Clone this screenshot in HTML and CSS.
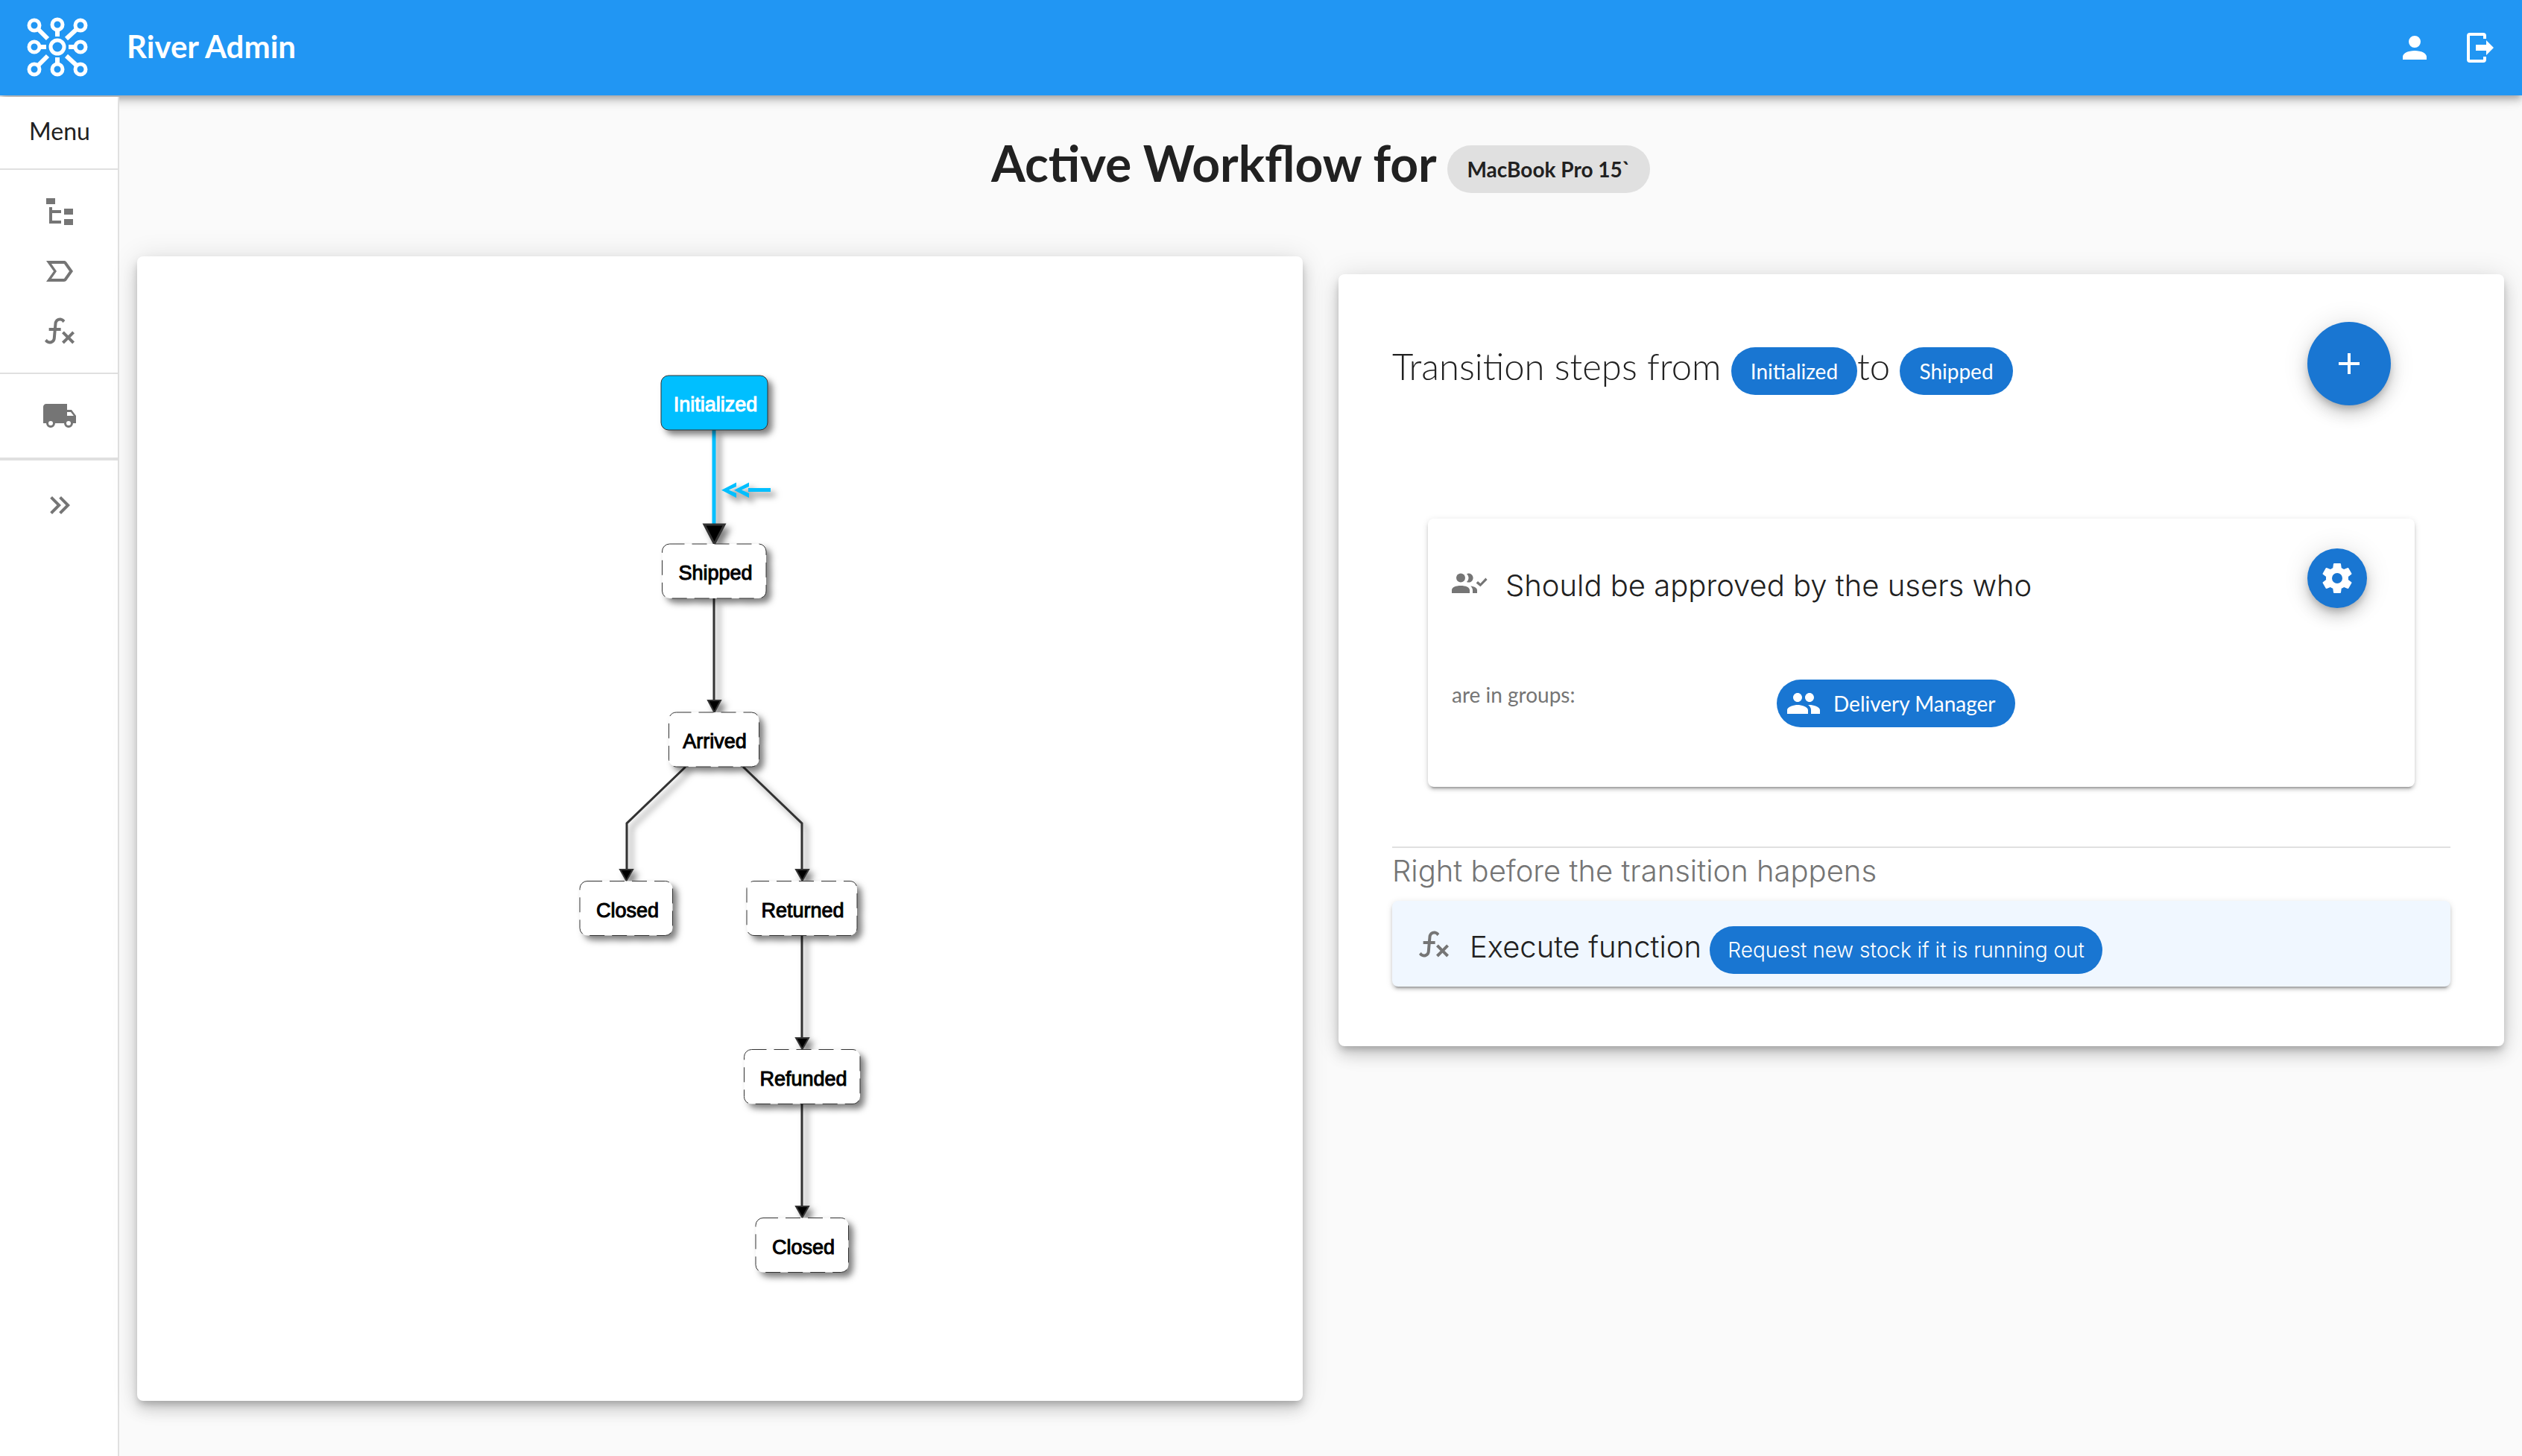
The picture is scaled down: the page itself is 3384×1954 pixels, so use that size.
FILE: index.html
```html
<!DOCTYPE html>
<html lang="en">
<head>
<meta charset="utf-8">
<title>River Admin</title>
<link rel="stylesheet" href="styles.css">
</head>
<body>
<header class="topbar">
  <a class="brand" href="#">
    <svg class="logo" viewBox="0 0 88 88" aria-hidden="true">
      <g fill="none" stroke="#fff" stroke-width="5">
        <circle cx="14" cy="14" r="7"/><circle cx="45" cy="13" r="7"/><circle cx="76" cy="14" r="7"/>
        <circle cx="14" cy="43" r="7"/><circle cx="45" cy="43" r="9"/><circle cx="76" cy="43" r="7"/>
        <circle cx="14" cy="73" r="7"/><circle cx="45" cy="73" r="7"/><circle cx="76" cy="73" r="7"/>
        <path stroke-width="6" d="M19 19 32 32M71 19 57 32M45 20V29M21 43H30M69 43H60M45 66V57M19 68 32 55M71 68 57 55"/>
      </g>
    </svg>
    <span class="brand-name">River Admin</span>
  </a>
  <nav class="actions">
    <button class="icon-button" aria-label="Account"><svg class="icon" viewBox="0 0 24 24"><path d="M12,4A4,4 0 0,1 16,8A4,4 0 0,1 12,12A4,4 0 0,1 8,8A4,4 0 0,1 12,4M12,14C16.42,14 20,15.79 20,18V20H4V18C4,15.79 7.58,14 12,14Z"/></svg></button>
    <button class="icon-button" aria-label="Log out"><svg class="icon" viewBox="0 0 24 24"><path d="M5 2H14A2 2 0 0 1 16 4V6H14V4H5V20H14V18H16V20A2 2 0 0 1 14 22H5A2 2 0 0 1 3 20V4A2 2 0 0 1 5 2ZM9 10H16V7L21 12L16 17V14H9Z"/></svg></button>
  </nav>
</header>
<div class="shell">
  <aside class="sidebar">
    <div class="menu-title">Menu</div>
    <nav class="menu-group">
      <a class="menu-item" href="#" aria-label="States"><svg class="icon" viewBox="0 0 24 24"><path d="M3,3H9V7H3V3M15,10H21V14H15V10M15,17H21V21H15V17M13,13H7V18H13V20H5V9H7V11H13V13Z"/></svg></a>
      <a class="menu-item" href="#" aria-label="Transitions"><svg class="icon" viewBox="0 0 24 24"><path fill-rule="evenodd" d="M3 5H15c.69 0 1.23.3 1.64.86L21 12l-4.36 6.14C16.23 18.7 15.69 19 15 19H3l5-7zM6.5 7 10 12 6.5 17H15l3.5-5L15 7z"/></svg></a>
      <a class="menu-item" href="#" aria-label="Functions"><svg class="icon" viewBox="0 0 24 24"><path id="fx" d="M12.42,5.29C11.32,5.19 10.35,6 10.25,7.11L10,10H12.82V12H9.82L9.38,17.07C9.18,19.27 7.24,20.9 5.04,20.7C3.79,20.59 2.66,19.9 2,18.83L3.5,17.33C3.83,18.38 4.96,18.97 6,18.63C6.78,18.39 7.33,17.7 7.4,16.89L7.82,12H4.82V10H8L8.27,6.93C8.46,4.73 10.39,3.1 12.6,3.28C13.86,3.39 15,4.09 15.66,5.17L14.16,6.67C13.91,5.9 13.23,5.36 12.42,5.29M22,13.65L20.59,12.24L17.76,15.07L14.93,12.24L13.5,13.65L16.35,16.5L13.5,19.31L14.93,20.72L17.76,17.89L20.59,20.72L22,19.31L19.17,16.5L22,13.65Z"/></svg></a>
    </nav>
    <nav class="menu-group menu-group-single">
      <a class="menu-item" href="#" aria-label="Shipping"><svg class="icon" viewBox="0 0 24 24"><path d="M18,18.5A1.5,1.5 0 0,1 16.5,17A1.5,1.5 0 0,1 18,15.5A1.5,1.5 0 0,1 19.5,17A1.5,1.5 0 0,1 18,18.5M19.5,9.5L21.46,12H17V9.5M6,18.5A1.5,1.5 0 0,1 4.5,17A1.5,1.5 0 0,1 6,15.5A1.5,1.5 0 0,1 7.5,17A1.5,1.5 0 0,1 6,18.5M20,8H17V4H3C1.89,4 1,4.89 1,6V17H3A3,3 0 0,0 6,20A3,3 0 0,0 9,17H15A3,3 0 0,0 18,20A3,3 0 0,0 21,17H23V12L20,8Z"/></svg></a>
    </nav>
    <button class="menu-item menu-expand" aria-label="Expand menu"><svg class="icon" viewBox="0 0 24 24"><path d="M5.59,7.41L7,6L13,12L7,18L5.59,16.59L10.17,12L5.59,7.41M11.59,7.41L13,6L19,12L13,18L11.59,16.59L16.17,12L11.59,7.41Z"/></svg></button>
  </aside>
  <main class="content">
    <h1 class="page-title">Active Workflow for <span class="chip chip-grey">MacBook Pro 15`</span></h1>
    <div class="columns">
      <section class="card" aria-label="Workflow diagram">
        <svg class="diagram" viewBox="184 344 1564 1536">
          <g class="shadowed edge">
            <path d="M958 803V940M920 1029 841 1105V1168M997 1029 1076 1105V1168M1076 1255V1394M1076 1481V1620"/>
            <path class="head" d="M950 940H967L958.500 956ZM832 1167H849L840.500 1182ZM1068 1167H1085L1076.500 1182ZM1068 1393H1085L1076.500 1408ZM1068 1619H1085L1076.500 1634Z"/>
          </g>
          <g class="shadowed edge">
            <path class="edge-active" d="M958 577V704"/>
            <path class="head head-active" d="M945 704H972L958.500 730Z"/>
          </g>
          <path class="shadowed marker" d="M988 647.500V653L978 657.500 988 662V668L968 657.700ZM1005 647.500V653L995 657.500 1005 662V668L985 657.700ZM1004 655H1034V660H1004Z"/>
          <g class="shadowed node">
            <rect class="node-active" x="887" y="504" width="143" height="73" rx="10"/>
            <rect x="888.500" y="730" width="139.500" height="73" rx="10"/>
            <rect x="897.500" y="956" width="121" height="73" rx="10"/>
            <rect x="778" y="1182.500" width="124.500" height="73" rx="10"/>
            <rect x="1002" y="1182.500" width="148" height="73" rx="10"/>
            <rect x="998.500" y="1408.500" width="155.500" height="73" rx="10"/>
            <rect x="1014" y="1634.500" width="124.500" height="73" rx="10"/>
          </g>
          <g class="node-label">
            <text class="label-active" x="960" y="552">Initialized</text>
            <text x="960" y="778">Shipped</text>
            <text x="959" y="1004">Arrived</text>
            <text x="842" y="1231">Closed</text>
            <text x="1077" y="1231">Returned</text>
            <text x="1078" y="1457">Refunded</text>
            <text x="1078" y="1683">Closed</text>
          </g>
        </svg>
      </section>
      <section class="card steps">
        <div class="steps-head">
          <h2 class="steps-title">Transition steps from <span class="chip">Initialized</span>to <span class="chip">Shipped</span></h2>
          <button class="fab" aria-label="Add step"><svg class="icon" viewBox="0 0 24 24"><path d="M19,13H13V19H11V13H5V11H11V5H13V11H19V13Z"/></svg></button>
        </div>
        <article class="rule">
          <div class="rule-head">
            <svg class="icon icon-grey rule-icon" viewBox="0 0 24 24" aria-hidden="true"><circle cx="6" cy="8.8" r="3"/><path d="M12 19V17C12 15 9.3 14 6 14S0 15 0 17V19ZM10 6.100A3 3 0 1 1 10 11.500C11.700 10 11.700 7.600 10 6.100ZM12.600 14.200C15.500 14.500 17 15.500 17 17V19H14V17C14 16 13.500 15 12.600 14.200ZM16.300 12.200 17.500 11 19.200 12.500 22.700 8.800 23.800 10 19.200 14.600Z"/></svg>
            <h3 class="rule-title">Should be approved by the users who</h3>
            <button class="fab fab-small" aria-label="Settings"><svg class="icon" viewBox="0 0 24 24"><path d="M12,15.5A3.5,3.5 0 0,1 8.5,12A3.5,3.5 0 0,1 12,8.5A3.5,3.5 0 0,1 15.5,12A3.5,3.5 0 0,1 12,15.5M19.43,12.97C19.47,12.65 19.5,12.33 19.5,12C19.5,11.67 19.47,11.34 19.43,11L21.54,9.37C21.73,9.22 21.78,8.95 21.66,8.73L19.66,5.27C19.54,5.05 19.27,4.96 19.05,5.05L16.56,6.05C16.04,5.66 15.5,5.32 14.87,5.07L14.5,2.42C14.46,2.18 14.25,2 14,2H10C9.75,2 9.54,2.18 9.5,2.42L9.13,5.07C8.5,5.32 7.96,5.66 7.44,6.05L4.95,5.05C4.73,4.96 4.46,5.05 4.34,5.27L2.34,8.73C2.21,8.95 2.27,9.22 2.46,9.37L4.57,11C4.53,11.34 4.5,11.67 4.5,12C4.5,12.33 4.53,12.65 4.57,12.97L2.46,14.63C2.27,14.78 2.21,15.05 2.34,15.27L4.34,18.73C4.46,18.95 4.73,19.03 4.95,18.95L7.44,17.94C7.96,18.34 8.5,18.68 9.13,18.93L9.5,21.58C9.54,21.82 9.75,22 10,22H14C14.25,22 14.46,21.82 14.5,21.58L14.87,18.93C15.5,18.67 16.04,18.34 16.56,17.94L19.05,18.95C19.27,19.03 19.54,18.95 19.66,18.73L21.66,15.27C21.78,15.05 21.73,14.78 21.54,14.63L19.43,12.97Z"/></svg></button>
          </div>
          <div class="rule-body">
            <span class="rule-label">are in groups:</span>
            <div><span class="chip chip-icon"><svg class="icon" viewBox="0 0 24 24" aria-hidden="true"><path d="M16 11c1.66 0 2.99-1.34 2.99-3S17.66 5 16 5c-1.66 0-3 1.34-3 3s1.34 3 3 3zm-8 0c1.66 0 2.99-1.34 2.99-3S9.66 5 8 5C6.34 5 5 6.34 5 8s1.34 3 3 3zm0 2c-2.33 0-7 1.17-7 3.500V19h14v-2.500c0-2.330-4.670-3.500-7-3.500zm8 0c-.29 0-.62.02-.97.05 1.160.84 1.970 1.970 1.970 3.450V19h6v-2.500c0-2.330-4.670-3.500-7-3.500z"/></svg>Delivery Manager</span></div>
          </div>
        </article>
        <h3 class="phase">Right before the transition happens</h3>
        <div class="hook">
          <svg class="icon icon-grey" viewBox="0 0 24 24" aria-hidden="true"><use href="#fx"/></svg>
          <p class="hook-text">Execute function <span class="chip">Request new stock if it is running out</span></p>
        </div>
      </section>
    </div>
  </main>
</div>
</body>
</html>
```
FILE: styles.css
```css
* { box-sizing: border-box; }
body {
  margin: 0;
  min-height: 100vh;
  display: flex;
  flex-direction: column;
  background: #fafafa;
  color: #212121;
  font-family: Lato, sans-serif;
}
h1, h2, h3, p { margin: 0; font-weight: inherit; }
button { border: 0; padding: 0; background: none; color: inherit; font: inherit; }
a { color: inherit; text-decoration: none; }
.icon { display: block; flex: none; width: 48px; height: 48px; fill: currentColor; }
.icon-grey { color: #757575; }

/* Top bar */
.topbar {
  display: flex;
  align-items: center;
  justify-content: space-between;
  height: 128px;
  padding: 0 32px;
  background: #2196f3;
  color: #fff;
  box-shadow: 0 4px 8px -2px rgba(0,0,0,.2), 0 8px 10px rgba(0,0,0,.14), 0 2px 20px rgba(0,0,0,.12);
}
.brand { display: flex; align-items: center; gap: 50px; }
.logo { width: 88px; height: 88px; }
.brand-name { padding-bottom: 4px; font-size: 42px; font-weight: 700; }
.actions { display: flex; gap: 40px; }

/* Side menu */
.shell { display: flex; flex: 1; }
.sidebar {
  flex: none;
  width: 160px;
  margin-top: 2px;
  background: #fff;
  box-shadow: inset -2px 0 #e0e0e0;
  color: #757575;
}
.menu-title {
  height: 98px;
  border-bottom: 2px solid #e0e0e0;
  color: #212121;
  font-size: 32px;
  line-height: 92px;
  text-align: center;
}
.menu-group { padding: 16px 0; border-bottom: 2px solid #e0e0e0; }
.menu-group-single { border-bottom-width: 4px; }
.menu-item { display: flex; align-items: center; justify-content: center; width: 100%; height: 80px; }
.menu-expand { margin-top: 20px; }

/* Page */
.content { flex: 1; min-width: 0; }
.page-title { height: 216px; padding: 43px 24px 0; font-size: 66px; font-weight: 700; line-height: 96px; text-align: center; }
.columns { display: grid; grid-template-columns: 1fr 1fr; gap: 48px; align-items: start; padding: 0 24px 72px; }
.card {
  border-radius: 8px;
  background: #fff;
  box-shadow: 0 6px 10px -2px rgba(0,0,0,.2), 0 12px 20px rgba(0,0,0,.14), 0 2px 36px rgba(0,0,0,.12);
}
.chip {
  display: inline-flex;
  align-items: center;
  height: 64px;
  padding: 0 26px;
  border-radius: 32px;
  background: #1976d2;
  color: #fff;
  font-size: 28px;
  line-height: 64px;
  vertical-align: middle;
}
.chip-grey { background: #e0e0e0; color: #212121; }
.chip-icon { gap: 16px; padding-left: 12px; }

/* Diagram */
.diagram { display: block; width: 100%; height: auto; }
.shadowed { filter: drop-shadow(6px 6px 4px rgba(0,0,0,.5)); }
.edge { fill: none; stroke: #333; stroke-width: 3px; }
.edge-active { stroke: #00bfff; stroke-width: 5px; }
.head { fill: #000; stroke-width: 2px; }
.head-active { stroke-width: 3px; }
.marker { fill: #00bfff; }
.node { fill: #fff; stroke: #333; stroke-width: 1px; stroke-dasharray: 20 10; }
.node-active { fill: #00bfff; stroke-dasharray: none; }
.node-label { fill: #000; stroke: #000; stroke-width: 1px; font: 27px "Liberation Sans", sans-serif; text-anchor: middle; }
.label-active { fill: #fff; stroke: #fff; }

/* Transition steps */
.steps { margin-top: 24px; padding: 64px 72px 80px; }
.steps-head { display: flex; justify-content: space-between; padding-right: 80px; }
.steps-title { padding-top: 19px; font-size: 49px; font-weight: 300; line-height: 80px; }
.steps-title .chip { font-weight: 400; }
.fab {
  display: flex;
  align-items: center;
  justify-content: center;
  flex: none;
  width: 112px;
  height: 112px;
  border-radius: 50%;
  background: #1976d2;
  color: #fff;
  box-shadow: 0 6px 10px -2px rgba(0,0,0,.2), 0 12px 20px rgba(0,0,0,.14), 0 2px 36px rgba(0,0,0,.12);
}
.fab-small { width: 80px; height: 80px; }
.rule, .hook {
  border-radius: 8px;
  box-shadow: 0 6px 2px -4px rgba(0,0,0,.2), 0 4px 4px rgba(0,0,0,.14), 0 2px 10px rgba(0,0,0,.12);
}
.rule { margin: 152px 48px 80px; padding: 40px 64px 80px 32px; }
.rule-head { display: flex; height: 80px; }
.rule-icon { margin-top: 22px; }
.rule-title { flex: 1; padding: 10px 0 0 24px; line-height: 80px; }
.rule-title, .phase, .hook-text { font-family: Inter, sans-serif; font-size: 40px; font-weight: 300; }
.rule-body { display: grid; grid-template-columns: 436px 1fr; height: 160px; padding-top: 96px; }
.rule-label { color: #757575; font-size: 28px; line-height: 40px; }
.phase {
  padding-bottom: 9px;
  border-top: 2px solid #e0e0e0;
  color: #757575;
  line-height: 62px;
}
.hook { display: flex; align-items: center; gap: 24px; height: 115px; padding: 0 32px; background: #f0f7ff; }
.hook-text { padding-top: 13px; line-height: 64px; }
.hook-text .chip { padding: 0 24px; }
```
